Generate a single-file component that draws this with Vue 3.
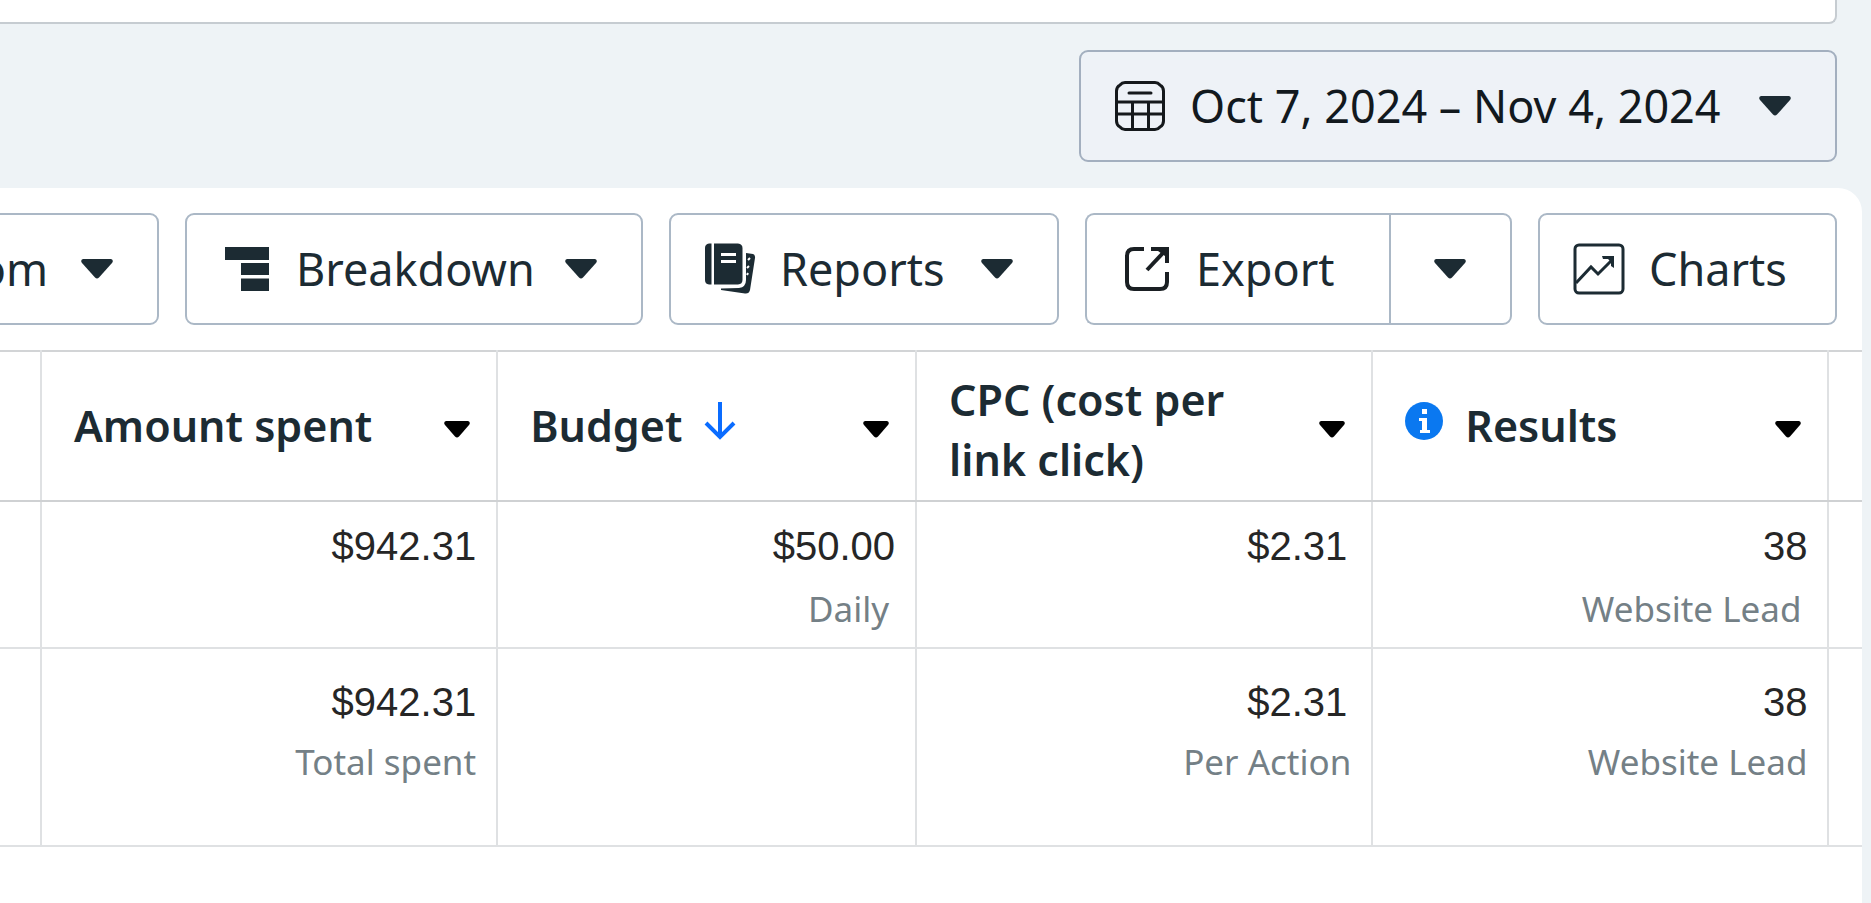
<script setup>
const columns = [
  { key: 'spent', label: 'Amount spent' },
  { key: 'budget', label: 'Budget', sorted: true },
  { key: 'cpc', label: 'CPC (cost per link click)' },
  { key: 'results', label: 'Results', info: true }
]

const campaign = {
  spent: { value: '$942.31' },
  budget: { value: '$50.00', note: 'Daily' },
  cpc: { value: '$2.31' },
  results: { value: '38', note: 'Website Lead' }
}

const totals = {
  spent: { value: '$942.31', note: 'Total spent' },
  budget: {},
  cpc: { value: '$2.31', note: 'Per Action' },
  results: { value: '38', note: 'Website Lead' }
}
</script>

<template>
  <div class="page">
    <div class="search-panel"></div>

    <div class="date-row">
      <button type="button" class="btn date">
        <svg class="icon" viewBox="0 0 52 52" fill="none" stroke="#15191c" stroke-width="3">
          <path d="M11 2.500H41Q44 2.500 46 5Q49.500 7 49.500 11V41Q49.500 45 46 47Q44 49.500 41 49.500H11Q8 49.500 6 47Q2.500 45 2.500 41V11Q2.500 7 6 5Q8 2.500 11 2.500Z" />
          <path d="M2.500 22H49.500M2.500 34H49.500M18.500 22V49M34.500 22V49" />
          <path d="M15 13H37" stroke-linecap="round" />
        </svg>
        <span>Oct 7, 2024 – Nov 4, 2024</span>
        <svg class="caret" viewBox="0 0 32 20"><path d="M2 0H30Q33 1 31 4L18 18.500Q16 20.500 14 18.500L1 4Q-1 1 2 0Z" /></svg>
      </button>
    </div>

    <main class="card">
      <div class="toolbar">
        <button type="button" class="btn columns">
          <span>Custom</span>
          <svg class="caret" viewBox="0 0 32 20"><path d="M2 0H30Q33 1 31 4L18 18.500Q16 20.500 14 18.500L1 4Q-1 1 2 0Z" /></svg>
        </button>

        <button type="button" class="btn breakdown">
          <svg class="icon" viewBox="0 0 52 52" fill="#1c2b33">
            <path d="M5 4H49V17H5ZM21 20H49V32H21ZM21 35.500H49V48H21Z" />
          </svg>
          <span>Breakdown</span>
          <svg class="caret" viewBox="0 0 32 20"><path d="M2 0H30Q33 1 31 4L18 18.500Q16 20.500 14 18.500L1 4Q-1 1 2 0Z" /></svg>
        </button>

        <button type="button" class="btn reports">
          <svg class="icon" viewBox="0 0 52 52" fill="#1c2b33">
            <path d="M5 .500H7.500V41.500H5Q1 41 1 37V5Q1 1 5 .500Z" />
            <path d="M10 .500H34Q38.500 1 38.500 5V37Q38.500 41 34 41.500H10Z" />
            <path d="M42 10L49 11Q51.500 12 51 15L46 47Q45 51 41 50.500L17 47V45.500L35 45Q42 44 42 37Z" />
            <path d="M17 11.500H32M17 18.500H32" stroke="#fff" stroke-width="3" />
            <path d="M44 17L46 15M43 25L45 23M43 32L44 30" stroke="#fff" stroke-width="2" />
          </svg>
          <span>Reports</span>
          <svg class="caret" viewBox="0 0 32 20"><path d="M2 0H30Q33 1 31 4L18 18.500Q16 20.500 14 18.500L1 4Q-1 1 2 0Z" /></svg>
        </button>

        <div class="split">
          <button type="button" class="btn export">
            <svg class="icon" viewBox="0 0 52 52" fill="none" stroke="#1a1f23" stroke-width="4">
              <path d="M24 6H14Q7 6 7 13V39Q7 46 14 46H40Q47 46 47 39V29" />
              <path d="M27 27L43 10" />
              <path d="M31 4H49V20H45V13L38 8H31Z" fill="#1a1f23" stroke="none" />
            </svg>
            <span>Export</span>
          </button>
          <button type="button" class="btn more" aria-label="Export options">
            <svg class="caret" viewBox="0 0 32 20"><path d="M2 0H30Q33 1 31 4L18 18.500Q16 20.500 14 18.500L1 4Q-1 1 2 0Z" /></svg>
          </button>
        </div>

        <button type="button" class="btn charts">
          <svg class="icon" viewBox="0 0 52 52" fill="none" stroke="#1c2b33" stroke-width="3">
            <rect x="2" y="2" width="48" height="48" rx="4" />
            <path d="M3 40L18 24L25 31L38 18" />
            <path d="M29 13H41V25L38 23V19L35 16H30Z" fill="#1c2b33" stroke="none" />
          </svg>
          <span>Charts</span>
        </button>
      </div>

      <table>
        <colgroup>
          <col class="col-edge" />
          <col class="col-wide" />
          <col class="col-mid" />
          <col class="col-wide" />
          <col class="col-wide" />
          <col />
        </colgroup>
        <thead>
          <tr>
            <td></td>
            <th v-for="c in columns" :key="c.key" scope="col">
              <div class="head">
                <span class="label" :class="[c.key]">
                  <svg v-if="c.info" class="info" viewBox="0 0 38 38">
                    <circle cx="19" cy="19" r="19" fill="#0a78f0" />
                    <path d="M17 7H22V12H17ZM14 16H22V28H25V31H15V28H17V19H14Z" fill="#fff" />
                  </svg>
                  <span>{{ c.label }}</span>
                  <svg v-if="c.sorted" class="sort" viewBox="0 0 32 38" fill="none" stroke="#0a6cff" stroke-width="4">
                    <path d="M16 0V35" />
                    <path d="M2 21L16 35L30 21" />
                  </svg>
                </span>
                <svg class="small-caret" viewBox="0 0 26 17"><path d="M2 0H24Q27 1 25 4L15 15.500Q13 17.500 11 15.500L1 4Q-1 1 2 0Z" /></svg>
              </div>
            </th>
            <td></td>
          </tr>
        </thead>
        <tbody>
          <tr class="row">
            <td></td>
            <td v-for="c in columns" :key="c.key" :class="c.key">
              <div class="value">{{ campaign[c.key].value }}</div>
              <div v-if="campaign[c.key].note" class="note">{{ campaign[c.key].note }}</div>
            </td>
            <td></td>
          </tr>
        </tbody>
        <tfoot>
          <tr class="total">
            <td></td>
            <td v-for="c in columns" :key="c.key" :class="c.key">
              <div class="value">{{ totals[c.key].value }}</div>
              <div v-if="totals[c.key].note" class="note">{{ totals[c.key].note }}</div>
            </td>
            <td></td>
          </tr>
        </tfoot>
      </table>
    </main>
  </div>
</template>

<style>
body {
  margin: 0;
}
</style>

<style scoped>
.page {
  display: flex;
  flex-direction: column;
  min-height: 100vh;
  overflow: hidden;
  background: #eef3f6;
  color: #1c2b33;
  font-family: "Noto Sans", "Open Sans", sans-serif;
}
.search-panel {
  height: 22px;
  margin-right: 34px;
  background: #fff;
  border: solid #c6ccd1;
  border-width: 0 2px 2px 0;
  border-radius: 0 0 8px 0;
}
.date-row {
  display: flex;
  justify-content: flex-end;
  padding: 26px 34px 26px 0;
}
.btn {
  box-sizing: border-box;
  display: flex;
  flex: none;
  align-items: center;
  gap: 24px;
  height: 112px;
  padding: 0 44px 0 33px;
  border: 2px solid #abb8c6;
  border-radius: 9px;
  background: #fff;
  color: #1c2b33;
  font: 400 45px/60px "Noto Sans", "Open Sans", sans-serif;
  white-space: nowrap;
}
.icon {
  flex: none;
  width: 52px;
  height: 52px;
}
.caret {
  flex: none;
  width: 32px;
  height: 20px;
  margin-left: auto;
  fill: #1c2b33;
}
.date {
  min-width: 758px;
  border-color: #a3afbf;
  background: #eef2f7;
  color: #12191e;
}
.card {
  flex: 1;
  margin-right: 9px;
  background: #fff;
  border-radius: 0 24px 0 0;
}
.toolbar {
  display: flex;
  justify-content: flex-end;
  gap: 26px;
  padding: 25px 25px 25px 0;
}
.columns {
  gap: 33px;
}
.breakdown {
  min-width: 458px;
}
.reports {
  min-width: 390px;
}
.split {
  display: flex;
}
.export {
  min-width: 304px;
  border-right: 0;
  border-radius: 9px 0 0 9px;
}
.more {
  min-width: 123px;
  border-radius: 0 9px 9px 0;
}
.charts {
  min-width: 299px;
}
table {
  width: 100%;
  table-layout: fixed;
  border-collapse: collapse;
}
.col-edge {
  width: 2.2%;
}
.col-wide {
  width: 24.5%;
}
.col-mid {
  width: 22.5%;
}
th,
td {
  padding: 0;
  border: 2px solid #dfe1e3;
}
tr > :first-child {
  border-left: 0;
}
tr > :last-child {
  border-right: 0;
}
thead tr {
  height: 150px;
}
thead th,
thead td {
  border-top-color: #d2d4d6;
  border-bottom: 2px solid #cfd1d3;
}
.head {
  display: flex;
  align-items: center;
  justify-content: space-between;
  padding: 0 26px 0 32px;
}
.label {
  display: flex;
  align-items: center;
  font-size: 43px;
  font-weight: 600;
  line-height: 60px;
  text-align: left;
}
.label.cpc {
  max-width: 320px;
  padding-top: 8px;
}
.small-caret {
  flex: none;
  width: 26px;
  height: 17px;
  margin-top: 6px;
  fill: #000;
}
.info {
  width: 38px;
  height: 38px;
  margin: 0 22px 10px 0;
}
.sort {
  width: 32px;
  height: 38px;
  margin: 0 0 10px 22px;
}
.row {
  height: 147px;
}
.total {
  height: 198px;
}
.row td,
.total td {
  padding: 14px 20px 0 0;
  vertical-align: top;
  text-align: right;
}
.total td {
  padding-top: 23px;
}
.value {
  color: #262626;
  font: 400 40px/60px "Liberation Sans", Arial, sans-serif;
}
.cpc .value {
  padding-right: 4px;
}
.note {
  color: #748086;
  font-size: 35px;
  line-height: 60px;
}
.row .note {
  padding-right: 6px;
  line-height: 66px;
}
</style>
